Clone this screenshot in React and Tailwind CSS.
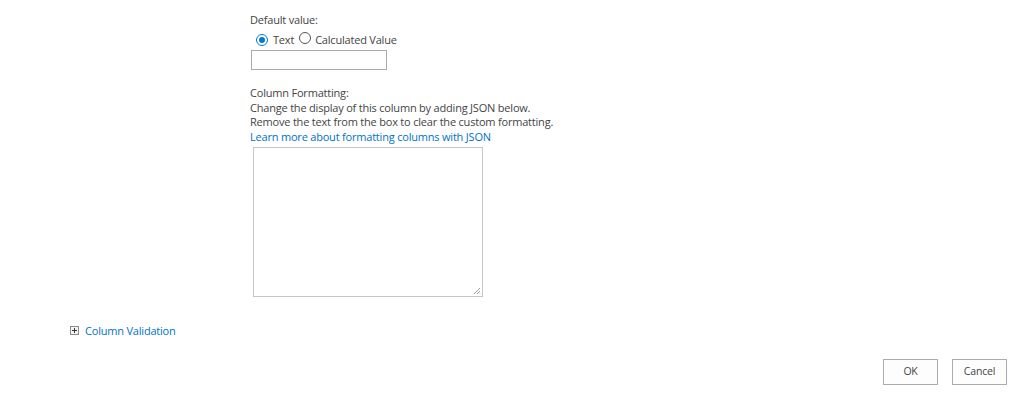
import React from "react";

function Radio({ checked }) {
  return checked ? (
    <span className="inline-flex h-[12px] w-[12px] items-center justify-center rounded-full border border-[#0078d4] bg-white">
      <span className="h-[6px] w-[6px] rounded-full bg-[#0078d4]" />
    </span>
  ) : (
    <span className="inline-block h-[12px] w-[12px] rounded-full border border-[#555] bg-white" />
  );
}

export default function App() {
  return (
    <div
      className="flex h-[400px] w-[1017px] flex-col bg-white text-[11px] tracking-[-0.2px] text-[#444]"
      style={{ fontFamily: '"Open Sans", "Noto Sans", sans-serif' }}
    >
      <div className="flex flex-col pl-[250px] pt-[12px]">
        <div className="leading-[16px]">Default value:</div>
        <div className="mt-[4px] flex h-[16px] items-center pl-[6px] leading-[16px]">
          <Radio checked />
          <span className="ml-[5px]">Text</span>
          <span className="ml-[5px]"><Radio /></span>
          <span className="ml-[4px]">Calculated Value</span>
        </div>
        <div className="mt-[2px] ml-[1px] h-[20px] w-[136px] border border-[#ababab] bg-white" />
        <div className="mt-[16px] leading-[14.7px]">
          <div>Column Formatting:</div>
          <div>Change the display of this column by adding JSON below.</div>
          <div>Remove the text from the box to clear the custom formatting.</div>
          <div className="text-[#0072c6]">Learn more about formatting columns with JSON</div>
        </div>
        <div className="relative mt-[2px] ml-[3px] h-[150px] w-[230px] border border-[#c6c6c6] bg-white">
          <svg className="absolute bottom-[1px] right-[1px]" width="8" height="8" viewBox="0 0 8 8">
            <path d="M7 1 L1 7 M7 4 L4 7 M7 6.5 L6.5 7" stroke="#9a9a9a" strokeWidth="1" />
          </svg>
        </div>
      </div>
      <div className="mt-[26px] flex items-center pl-[70px] leading-[16px]">
        <svg width="9" height="9" viewBox="0 0 9 9" className="shrink-0">
          <rect x="0.5" y="0.5" width="8" height="8" fill="#f4f4f4" stroke="#8a8a8a" />
          <path d="M2 4.5 H7 M4.5 2 V7" stroke="#333" strokeWidth="1" />
        </svg>
        <span className="ml-[6px] text-[#0072c6]">Column Validation</span>
      </div>
      <div className="mt-[20px] flex justify-end gap-[14px] pr-[10px]">
        <button className="h-[26px] w-[55px] border border-[#ababab] bg-[#fdfdfd] text-[10.5px] text-[#444]">OK</button>
        <button className="h-[26px] w-[55px] border border-[#ababab] bg-[#fdfdfd] text-[10.5px] text-[#444]">Cancel</button>
      </div>
    </div>
  );
}
